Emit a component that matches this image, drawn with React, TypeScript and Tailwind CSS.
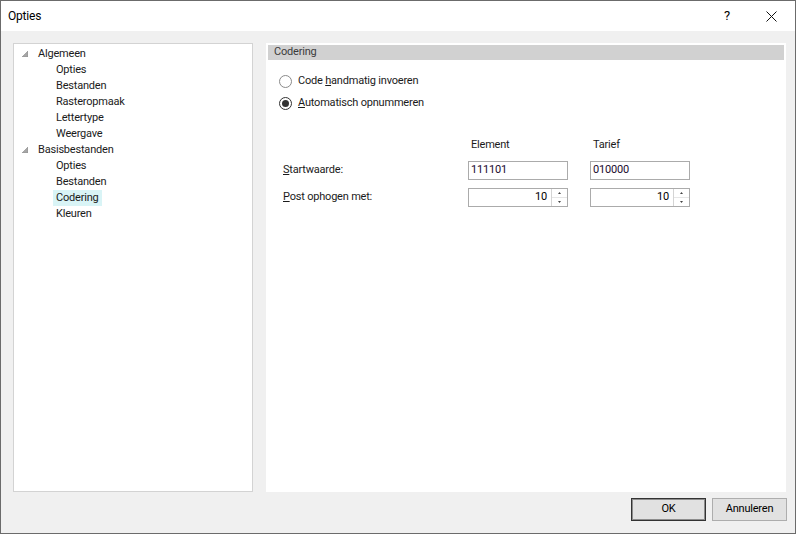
import React from "react";

const font = "font-['Roboto','Liberation_Sans',sans-serif] text-[11px] tracking-[-0.2px]";

function Expander() {
  return (
    <svg width="6" height="6" viewBox="0 0 6 6" className="shrink-0">
      <polygon points="6,0 6,6 0,6" fill="#a6a6a6" stroke="#8c8c8c" strokeWidth="0.6" />
    </svg>
  );
}

function TreeNode({ label, children }: { label: string; children: string[] }) {
  return (
    <div>
      <div className="flex h-4 items-center pl-[8px]">
        <Expander />
        <span className="ml-[10px] text-[#1b1b1b]">{label}</span>
      </div>
      {children.map((c) => (
        <div key={c} className="flex h-4 items-center pl-[39px]">
          <span
            className={
              "px-[3px] leading-4 text-[#1b1b1b] " + (c === "Codering" && label === "Basisbestanden" ? "bg-[#d9f4f6]" : "")
            }
          >
            {c}
          </span>
        </div>
      ))}
    </div>
  );
}

function Radio({ checked, children }: { checked?: boolean; children: React.ReactNode }) {
  return (
    <div className="flex h-[22px] items-center">
      <span
        className={
          "flex h-[13px] w-[13px] items-center justify-center rounded-full border bg-white " +
          (checked ? "border-[#333333]" : "border-[#8a8a8a]")
        }
      >
        {checked && <span className="h-[7px] w-[7px] rounded-full bg-[#333333]" />}
      </span>
      <span className="ml-[6px] text-[#1b1b1b]">{children}</span>
    </div>
  );
}

function SpinBox({ value }: { value: string }) {
  return (
    <div className="flex h-[19px] w-[100px] border border-[#ababab] bg-white">
      <div className="flex flex-1 items-center justify-end pr-[4px] text-black">{value}</div>
      <div className="flex w-[16px] flex-col border-l border-[#d4d4d4]">
        <div className="flex flex-1 items-center justify-center border-b border-[#e6e6e6]">
          <svg width="3" height="2" viewBox="0 0 3 2">
            <polygon points="1.5,0 3,2 0,2" fill="#444" />
          </svg>
        </div>
        <div className="flex flex-1 items-center justify-center">
          <svg width="3" height="2" viewBox="0 0 3 2">
            <polygon points="0,0 3,0 1.5,2" fill="#444" />
          </svg>
        </div>
      </div>
    </div>
  );
}

function TextBox({ value }: { value: string }) {
  return (
    <div className="flex h-[19px] w-[100px] items-center border border-[#ababab] bg-white pl-[2px] text-[#1a0b2e]">
      {value}
    </div>
  );
}

export default function App() {
  return (
    <div className={"flex h-[534px] w-[796px] flex-col border border-[#6b6b6b] bg-[#f0f0f0] " + font}>
      {/* title bar */}
      <div className="flex h-[30px] items-center bg-white">
        <span className="ml-[7px] text-[12px] text-black">Opties</span>
        <div className="flex-1" />
        <span className="mr-[36px] text-[13px] text-black">?</span>
        <svg width="11" height="11" viewBox="0 0 11 11" className="mr-[18px]">
          <path d="M0.5 0.5 L10.5 10.5 M10.5 0.5 L0.5 10.5" stroke="#111" strokeWidth="1" />
        </svg>
      </div>

      {/* body */}
      <div className="flex pl-[12px] pt-[12px]">
        <div className="h-[449px] w-[240px] border border-[#d3d3d3] bg-white pt-[2px]">
          <TreeNode label="Algemeen" children={["Opties", "Bestanden", "Rasteropmaak", "Lettertype", "Weergave"]} />
          <TreeNode label="Basisbestanden" children={["Opties", "Bestanden", "Codering", "Kleuren"]} />
        </div>

        <div className="ml-[13px] h-[449px] w-[520px] bg-white p-[2px]">
          <div className="flex h-[15px] items-center bg-[#d1d1d1] pl-[6px] text-[#3c3c3c]">Codering</div>

          <div className="mt-[10px] pl-[11px]">
            <Radio>
              Code <span className="underline">h</span>andmatig invoeren
            </Radio>
            <Radio checked>
              <span className="underline">A</span>utomatisch opnummeren
            </Radio>
          </div>

          <div className="mt-[22px] pl-[15px]">
            <div className="flex h-[18px] items-center">
              <div className="w-[185px]" />
              <div className="w-[122px] pl-[3px] text-[#1b1b1b]">Element</div>
              <div className="pl-[3px] text-[#1b1b1b]">Tarief</div>
            </div>
            <div className="mt-[7px] flex items-center">
              <div className="w-[185px] text-[#1b1b1b]">
                <span className="underline">S</span>tartwaarde:
              </div>
              <TextBox value="111101" />
              <div className="w-[22px]" />
              <TextBox value="010000" />
            </div>
            <div className="mt-[8px] flex items-center">
              <div className="w-[185px] text-[#1b1b1b]">
                <span className="underline">P</span>ost ophogen met:
              </div>
              <SpinBox value="10" />
              <div className="w-[22px]" />
              <SpinBox value="10" />
            </div>
          </div>
        </div>
      </div>

      {/* buttons */}
      <div className="flex justify-end gap-[6px] pr-[8px] pt-[6px]">
        <button className="flex h-[23px] w-[75px] items-center justify-center border border-[#333333] bg-[#e1e1e1] text-black shadow-[inset_0_0_0_1px_#8c8c8c]">
          OK
        </button>
        <button className="flex h-[23px] w-[75px] items-center justify-center border border-[#adadad] bg-[#e1e1e1] text-black">
          Annuleren
        </button>
      </div>
    </div>
  );
}
